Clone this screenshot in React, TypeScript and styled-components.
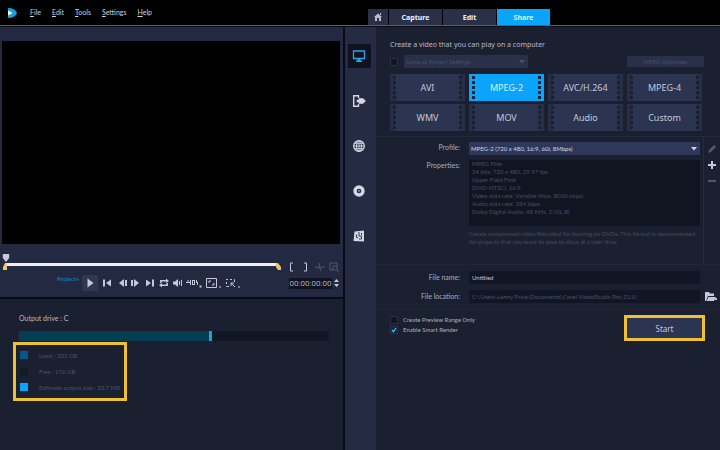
import React, { useState } from "react";
import styled, { createGlobalStyle } from "styled-components";

const Global = createGlobalStyle`
  * { box-sizing: border-box; }
  body { margin: 0; background: #1b2031; color: #aab0c0; font: 7px/9px Lato, "Noto Sans", sans-serif; }
  button, input, select { font: inherit; color: inherit; margin: 0; padding: 0; border: 0; background: none; }
  svg { display: block; }
`;

const Page = styled.div`
  min-height: 100vh;
  display: flex;
  flex-direction: column;
`;

const Header = styled.header`
  height: 26px;
  flex: none;
  display: flex;
  align-items: center;
  background: #000;
  border-bottom: 1px solid #2f6c98;
`;

const Brand = styled.div`
  flex: 1 1 0;
  display: flex;
  align-items: center;
  gap: 13px;
  padding-left: 8px;
`;

const Menu = styled.nav`
  display: flex;
  gap: 11px;
`;

const MenuItem = styled.button`
  color: #d2d2d6;
  &::first-letter { text-decoration: underline; }
`;

const Tabs = styled.nav`
  flex: 1 1 0;
  align-self: stretch;
  display: flex;
  align-items: flex-end;
  gap: 1px;
  padding-left: 8px;
`;

const Tab = styled.button<{ $active?: boolean; $small?: boolean }>`
  width: ${(p) => (p.$small ? 20 : 53)}px;
  height: 16px;
  display: flex;
  align-items: center;
  justify-content: center;
  font-family: "Noto Sans", sans-serif;
  font-weight: 700;
  color: ${(p) => (p.$active ? "#d8f2ff" : p.$small ? "#b9bdcb" : "#f2f2f6")};
  background: ${(p) => (p.$active ? "#0aa4fb" : "#2a3048")};
`;

const Main = styled.main`
  flex: 1;
  display: grid;
  grid-template-columns: minmax(0, 343fr) minmax(0, 375fr);
  gap: 2px;
  background: #090c16;
  padding-top: 1px;
`;

const LeftColumn = styled.div`
  display: flex;
  flex-direction: column;
  gap: 2px;
`;

const Player = styled.section`
  background: #222941;
  padding: 14px 2px 6px;
`;

const Screen = styled.div`
  height: 203px;
  margin-right: 1px;
  background: #000;
`;

const TimeRow = styled.div`
  display: flex;
  align-items: center;
  height: 26px;
  margin-top: 5px;
  padding-right: 2px;
`;

const Track = styled.div`
  flex: 1;
  position: relative;
  height: 20px;
  margin-right: 5px;
`;

const Scrubber = styled.input`
  display: block;
  width: 100%;
  height: 20px;
  appearance: none;
  cursor: pointer;
  background: linear-gradient(#f1efea, #f1efea) center 11px / calc(100% - 8px) 3px no-repeat;
  &::-webkit-slider-thumb {
    appearance: none;
    width: 8px;
    height: 18px;
    background: #c8c9dc;
    clip-path: polygon(10% 5%, 90% 5%, 90% 28%, 50% 50%, 10% 28%);
  }
`;

const TrimMark = styled.svg<{ $end?: boolean }>`
  position: absolute;
  top: 11px;
  ${(p) => (p.$end ? "right: 0;" : "left: 0;")}
  pointer-events: none;
`;

const TrimTools = styled.div`
  display: flex;
  gap: 3px;
  align-self: flex-end;
`;

const Tool = styled.button<{ $w?: number; $dim?: boolean; $boxed?: boolean }>`
  width: ${(p) => p.$w ?? 14}px;
  height: 16px;
  flex: none;
  display: flex;
  align-items: center;
  justify-content: center;
  color: ${(p) => (p.$dim ? "#4f5873" : "#c5c9d9")};
  background: ${(p) => (p.$boxed ? "#30374f" : "transparent")};
`;

const Transport = styled.div`
  display: flex;
  align-items: center;
  height: 16px;
  padding-left: 55px;
`;

const ProjectLabel = styled.span`
  align-self: flex-start;
  width: 25px;
  line-height: 7px;
  font-weight: 700;
  font-size: 6px;
  color: #087fb9;
`;

const Timecode = styled.label`
  margin-left: auto;
  display: flex;
  align-items: center;
  gap: 2px;
  padding: 0 2px;
  color: #c5c9d9;
`;

const TimeInput = styled.input`
  width: 43px;
  height: 11px;
  text-align: center;
  color: #a9adba;
  background: #101320;
  font: 8px/11px Roboto, sans-serif;
`;

const Drive = styled.section`
  flex: 1;
  background: #1b2031;
  padding: 14px 14px 0 14px;
`;

const DriveTitle = styled.h2`
  margin: 0 0 8px 5px;
  font-size: 7px;
  line-height: 10px;
  font-weight: 400;
  color: #b5bac8;
`;

const Meter = styled.div`
  height: 10px;
  margin-left: 5px;
  background: #111624;
`;

const MeterFill = styled.div`
  height: 100%;
  background: #043e55;
  border-right: 3px solid #259ed3;
`;

const Legend = styled.ul`
  width: 114px;
  margin: 1px 0 0 -1px;
  padding: 2px 0 3px 4px;
  list-style: none;
  border: 3px solid #efbf35;
`;

const LegendItem = styled.li<{ $color: string }>`
  display: flex;
  align-items: center;
  gap: 11px;
  height: 16px;
  font-size: 6px;
  white-space: nowrap;
  color: #485069;
  &::before {
    content: "";
    width: 8px;
    height: 8px;
    background: ${(p) => p.$color};
  }
`;

const RightColumn = styled.div`
  display: flex;
  min-width: 0;
`;

const Sidebar = styled.nav`
  width: 31px;
  flex: none;
  display: flex;
  flex-direction: column;
  align-items: center;
  gap: 21px;
  padding: 17px 3px 0 0;
  background: #252b43;
`;

const SideButton = styled.button<{ $active?: boolean }>`
  width: 23px;
  height: 24px;
  display: grid;
  place-items: center;
  color: ${(p) => (p.$active ? "#29a5e6" : "#d4d8e6")};
  background: ${(p) => (p.$active ? "#10131f" : "transparent")};
`;

const Content = styled.div`
  flex: 1;
  min-width: 0;
  background: #1b2031;
`;

const Formats = styled.section`
  padding: 12px 18px 5px 14px;
  border-bottom: 1px solid #23293c;
`;

const Title = styled.h1`
  margin: 0 0 4px;
  font: 400 7px/12px "Noto Sans", sans-serif;
  color: #b5bac8;
`;

const SettingRow = styled.div`
  display: flex;
  align-items: center;
  gap: 6px;
  height: 13px;
  margin-bottom: 6px;
  font-size: 6px;
`;

const Check = styled.input`
  appearance: none;
  width: 8px;
  height: 8px;
  flex: none;
  background: #111521;
  border: 1px solid #2a3043;
  &:checked {
    background: #0c2942 url("data:image/svg+xml,%3Csvg xmlns='http://www.w3.org/2000/svg' viewBox='0 0 6 6'%3E%3Cpath d='M1 3l1.5 1.7L5 1' fill='none' stroke='%2349b8f4' stroke-width='1.2'/%3E%3C/svg%3E");
  }
`;

const SelectBox = styled.div<{ $dim?: boolean }>`
  position: relative;
  flex: ${(p) => (p.$dim ? "0 1 124px" : "1")};
  min-width: 0;
  color: ${(p) => (p.$dim ? "#48516e" : "#d0d5e2")};
  background: ${(p) => (p.$dim ? "#293048" : "#2e385a")};
`;

const Select = styled.select`
  display: block;
  width: 100%;
  height: 13px;
  padding: 0 14px 0 2px;
  appearance: none;
  opacity: 1;
  font-size: 6px;
`;

const SelectArrow = styled.svg`
  position: absolute;
  right: 3px;
  top: 4px;
  pointer-events: none;
`;

const Optimizer = styled.button`
  width: 77px;
  height: 11px;
  margin-left: auto;
  margin-right: -2px;
  color: #46506e;
  background: #293048;
`;

const FormatGrid = styled.div`
  display: grid;
  grid-template-columns: repeat(4, minmax(0, 1fr));
  gap: 3px 4px;
`;

const FormatButton = styled.button<{ $active?: boolean }>`
  position: relative;
  height: 27px;
  font: 9px "Noto Sans", sans-serif;
  color: ${(p) => (p.$active ? "#d8f2ff" : "#c3c9da")};
  background: ${(p) => (p.$active ? "#0aa4fb" : "#2b3451")};
  box-shadow: ${(p) => (p.$active ? "none" : "inset 5px 0 #262e48, inset -5px 0 #262e48")};
  &::before, &::after {
    content: "";
    position: absolute;
    top: 2px;
    bottom: 1px;
    width: 3px;
    background: repeating-linear-gradient(#1b2031 0 3px, transparent 3px 5px);
  }
  &::before { left: 3px; }
  &::after { right: 3px; }
`;

const Details = styled.section`
  display: grid;
  grid-template-columns: minmax(0, 1fr) 17px;
  border-bottom: 1px solid #202638;
`;

const FieldLabel = styled.label`
  text-align: right;
  padding-right: 9px;
  line-height: 11px;
  color: #a7adbd;
`;

const Fields = styled.div`
  display: grid;
  grid-template-columns: 93px minmax(0, 1fr);
  row-gap: 5px;
  align-content: start;
  padding: 5px 3px 18px 0;
`;

const Properties = styled.output`
  height: 66px;
  padding: 0 3px;
  font-size: 6px;
  line-height: 8px;
  white-space: pre-line;
  color: #464e63;
  background: #111522;
`;

const Description = styled.p`
  grid-column: 2;
  margin: -1px 0 0;
  font-size: 6px;
  line-height: 8px;
  color: #434b60;
`;

const ProfileTools = styled.div`
  display: flex;
  flex-direction: column;
  align-items: center;
  padding-top: 4px;
  border-left: 1px solid #252b3e;
`;

const Files = styled.section`
  display: grid;
  grid-template-columns: 93px minmax(0, 1fr) 20px;
  row-gap: 4px;
  align-items: center;
  justify-items: end;
  padding: 6px 0 5px;
  border-bottom: 1px solid #202638;
`;

const TextInput = styled.input<{ $dim?: boolean }>`
  width: 100%;
  height: 13px;
  padding: 0 3px;
  font-size: 6px;
  color: ${(p) => (p.$dim ? "#4a5269" : "#c3c7d2")};
  background: #121624;
`;

const Actions = styled.section`
  display: flex;
  justify-content: space-between;
  padding: 5px 15px 0 14px;
`;

const Options = styled.div`
  display: flex;
  flex-direction: column;
  gap: 1px;
  font-size: 6px;
`;

const Option = styled.label`
  display: flex;
  align-items: center;
  gap: 5px;
`;

const Start = styled.button`
  width: 81px;
  height: 26px;
  font: 8px "Noto Sans", sans-serif;
  color: #c3c9da;
  background: #2b3451;
  border: 3px solid #efbf35;
`;

const Logo = () => (
  <svg width="9" height="12" viewBox="0 0 9 12" aria-hidden="true">
    <path d="M0 1Q7 1 9 6Q7 11 0 11Z" fill="#18a2dc" />
    <path d="M0 3.5L4.5 6L0 8.5Z" fill="#fff" />
  </svg>
);

const Glyph = ({ d, w = 10, h = 10, line }: { d: string; w?: number; h?: number; line?: boolean }) => (
  <svg width={w} height={h} viewBox={`0 0 ${w} ${h}`} aria-hidden="true"
    fill={line ? "none" : "currentColor"} stroke={line ? "currentColor" : "none"} fillRule="evenodd">
    <path d={d} />
  </svg>
);

const transport = [
  { name: "Play", w: 16, boxed: true, d: "M2.5 0.5L8.5 5L2.5 9.5Z" },
  { name: "Home", w: 18, d: "M1 1.5H3V8.5H1ZM9 1.5V8.5L4 5Z" },
  { name: "Previous frame", w: 13, d: "M6 1V9L1 5ZM7 2H9V8H7Z" },
  { name: "Next frame", w: 12, d: "M1 2H3V8H1ZM4 1L9 5L4 9Z" },
  { name: "End", w: 17, d: "M1 1.5L6 5L1 8.5ZM7 1.5H9V8.5H7Z" },
  { name: "Repeat", w: 12, d: "M1 5V2H7V0.5L10 3L7 5V3.5H2.5V5ZM9 5V8H3V9.5L0 7L3 5V6.5H7.5V5Z" },
  { name: "Volume", w: 15, d: "M0 3.5H2L5 1V9L2 6.5H0ZM6 3H7V7H6ZM8 2H9V8H8Z" },
];

const sideItems = ["Computer", "Device", "Web", "Disc", "3D Movie"];

const SideIcon = ({ name }: { name: string }) => {
  const common = { width: 14, height: 14, viewBox: "0 0 14 14", fill: "none", stroke: "currentColor", "aria-hidden": true } as const;
  if (name === "Computer")
    return <svg {...common}><path d="M1.5 2H12.5V9.5H1.5Z" strokeWidth="1.3" /><path d="M5.5 10H8.5V11.5H10V13H4V11.5H5.5Z" fill="currentColor" stroke="none" /></svg>;
  if (name === "Device")
    return <svg {...common}><path d="M6.5 4V1.8H1.7V12.2H6.5V10" strokeWidth="1.4" /><path d="M5 6H7V4.5H11L13.5 7L11 9.5H7V8H5Z" fill="currentColor" stroke="currentColor" strokeLinejoin="round" strokeWidth="0.6" /></svg>;
  if (name === "Web")
    return <svg {...common}><circle cx="7" cy="7" r="5.3" strokeWidth="1.3" /><ellipse cx="7" cy="7" rx="2.4" ry="5.3" /><path d="M7 2V12M2 7H12M3 4.3H11M3 9.7H11" strokeWidth="0.9" /></svg>;
  if (name === "Disc")
    return <svg {...common}><circle cx="7" cy="7" r="4" strokeWidth="3.4" /><circle cx="7" cy="7" r="0.8" fill="currentColor" stroke="none" /></svg>;
  return <svg {...common}><path d="M2.5 2.5L12 1.5V12.5L1.5 12Z" fill="currentColor" stroke="none" /><path d="M7 3V7H9.5V10H7M4.5 8.5H6M9.5 4V6M4.5 5.5V8.5" stroke="#252b43" strokeWidth="0.9" /></svg>;
};

const Arrow = () => (
  <SelectArrow width="6" height="5" viewBox="0 0 6 5" aria-hidden="true"><path d="M0 1H6L3 4.5Z" fill="currentColor" /></SelectArrow>
);

const formats = ["AVI", "MPEG-2", "AVC/H.264", "MPEG-4", "WMV", "MOV", "Audio", "Custom"];

const legend = [
  { color: "#075589", text: "Used : 335 GB" },
  { color: "#141822", text: "Free : 176 GB" },
  { color: "#0aa4fb", text: "Estimate output size : 33.7 MB" },
];

const propertyText = `MPEG Files
24 bits, 720 x 480, 29.97 fps
Upper Field First
(DVD-NTSC),  16:9
Video data rate: Variable (Max.  8000 kbps)
Audio data rate: 384 kbps
Dolby Digital Audio, 48 KHz, 2/0(L,R)`;

export default function App() {
  const [format, setFormat] = useState("MPEG-2");
  const [position, setPosition] = useState(0);
  const used = 62.4;

  return (
    <Page>
      <Global />
      <Header>
        <Brand>
          <Logo />
          <Menu>
            {["File", "Edit", "Tools", "Settings", "Help"].map((m) => <MenuItem key={m}>{m}</MenuItem>)}
          </Menu>
        </Brand>
        <Tabs>
          <Tab $small aria-label="Welcome"><Glyph w={8} h={8} d="M4 0.5L8 4H7V8H5V5H3V8H1V4H0L4 0.5ZM6 0H7V2H6Z" /></Tab>
          <Tab>Capture</Tab>
          <Tab>Edit</Tab>
          <Tab $active>Share</Tab>
        </Tabs>
      </Header>
      <Main>
        <LeftColumn>
          <Player>
            <Screen />
            <TimeRow>
              <Track>
                <Scrubber type="range" aria-label="Position" value={position} onChange={(e) => setPosition(Number(e.target.value))} />
                <TrimMark width="7" height="8" viewBox="0 0 7 8" aria-hidden="true"><path d="M3 0H5V7H1V4Z" fill="#f0c566" /></TrimMark>
                <TrimMark $end width="7" height="8" viewBox="0 0 7 8" aria-hidden="true"><path d="M4 0H2V4L4 7H7V4Z" fill="#f0c566" /></TrimMark>
              </Track>
              <TrimTools>
                <Tool $w={11} aria-label="Mark in"><Glyph line w={5} h={10} d="M4 1H1.5V9H4" /></Tool>
                <Tool $w={11} aria-label="Mark out"><Glyph line w={5} h={10} d="M1 1H3.5V9H1" /></Tool>
                <Tool $w={11} $dim aria-label="Split clip"><Glyph line d="M0 5H4M6 5H10M4 1L6 9M3 7L5 5" /></Tool>
                <Tool $w={11} $dim aria-label="Enlarge"><Glyph line d="M8 4V1H1V8H4M4 4H8V8H4ZM8 8L10 10" /></Tool>
              </TrimTools>
            </TimeRow>
            <Transport>
              <ProjectLabel>Project+</ProjectLabel>
              {transport.map((t) => (
                <Tool key={t.name} $w={t.w} $boxed={t.boxed} aria-label={t.name}><Glyph d={t.d} /></Tool>
              ))}
              <Tool $w={18} aria-label="Preview quality"><Glyph w={16} d="M0 4H1.5V2H2.5V4H4V2H5V7H4V5H0ZM6 2H9V7H6ZM7 3V6H8V3ZM10 2H11V4H12V7H11V5H10ZM13.5 7.5H15.5V9.5H13.5Z" /></Tool>
              <Tool $w={20} aria-label="Aspect ratio"><Glyph line w={15} d="M0.5 0.5H10.5V9.5H0.5ZM3 5V3H5M8 5V7H6M13 9H15" /></Tool>
              <Tool $w={20} aria-label="Crop mode"><Glyph line w={14} d="M0.5 2V1.5H2M4 1.5H6M8 1.5H8.5V4M0.5 4V6M0.5 8V8.5H3M5 5L9 9M5 5V8M5 5H8M12 9H14" /></Tool>
              <Timecode>
                <TimeInput aria-label="Timecode" defaultValue="00:00:00:00" />
                <Glyph w={5} h={10} d="M0 4L2.5 1L5 4ZM0 6H5L2.5 9Z" />
              </Timecode>
            </Transport>
          </Player>
          <Drive>
            <DriveTitle>Output drive : C</DriveTitle>
            <Meter><MeterFill style={{ width: `${used}%` }} /></Meter>
            <Legend>
              {legend.map((l) => <LegendItem key={l.text} $color={l.color}>{l.text}</LegendItem>)}
            </Legend>
          </Drive>
        </LeftColumn>
        <RightColumn>
          <Sidebar>
            {sideItems.map((name, i) => (
              <SideButton key={name} $active={i === 0} aria-label={name}><SideIcon name={name} /></SideButton>
            ))}
          </Sidebar>
          <Content>
            <Formats>
              <Title>Create a video that you can play on a computer</Title>
              <SettingRow>
                <Check type="checkbox" aria-label="Same as project settings" />
                <SelectBox $dim>
                  <Select disabled aria-label="Project settings"><option>Same as Project Settings</option></Select>
                  <Arrow />
                </SelectBox>
                <Optimizer disabled>MPEG Optimizer</Optimizer>
              </SettingRow>
              <FormatGrid>
                {formats.map((f) => (
                  <FormatButton key={f} $active={f === format} onClick={() => setFormat(f)}>{f}</FormatButton>
                ))}
              </FormatGrid>
            </Formats>
            <Details>
              <Fields>
                <FieldLabel htmlFor="profile">Profile:</FieldLabel>
                <SelectBox>
                  <Select id="profile"><option>MPEG-2 (720 x 480, 16:9, 60i, 8Mbps)</option></Select>
                  <Arrow />
                </SelectBox>
                <FieldLabel htmlFor="properties">Properties:</FieldLabel>
                <Properties id="properties">{propertyText}</Properties>
                <Description>Create compressed video files ideal for burning on DVDs. This format is recommended for projects that you want to save to discs at a later time.</Description>
              </Fields>
              <ProfileTools>
                <Tool $dim aria-label="Edit profile"><Glyph d="M1 9L2 6L7 1L9 3L4 8Z" /></Tool>
                <Tool aria-label="Add profile"><Glyph d="M4 1H6V4H9V6H6V9H4V6H1V4H4Z" /></Tool>
                <Tool $dim aria-label="Delete profile"><Glyph d="M1 4H9V6H1Z" /></Tool>
              </ProfileTools>
            </Details>
            <Files>
              <FieldLabel htmlFor="name">File name:</FieldLabel>
              <TextInput id="name" defaultValue="Untitled" />
              <span />
              <FieldLabel htmlFor="location">File location:</FieldLabel>
              <TextInput id="location" $dim readOnly value="C:\Users\Lenny Price\Documents\Corel VideoStudio Pro\21.0\" />
              <Tool $w={18} aria-label="Browse"><Glyph w={12} h={11} d="M0 1H4L5 2.5H9V5H3L1 10H0ZM3.5 6H11L9 10H1.5ZM10 7H12V9H10Z" /></Tool>
            </Files>
            <Actions>
              <Options>
                <Option><Check type="checkbox" />Create Preview Range Only</Option>
                <Option><Check type="checkbox" defaultChecked />Enable Smart Render</Option>
              </Options>
              <Start>Start</Start>
            </Actions>
          </Content>
        </RightColumn>
      </Main>
    </Page>
  );
}
